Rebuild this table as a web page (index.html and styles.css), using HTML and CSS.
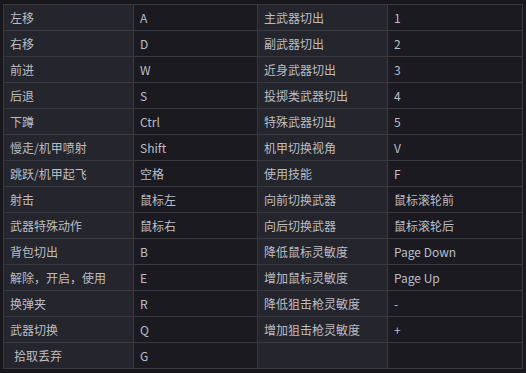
FILE: index.html
```html
<!DOCTYPE html>
<html lang="zh">
<head>
<meta charset="utf-8">
<link rel="stylesheet" href="styles.css">
</head>
<body>
<div class="keys">
  <div class="k">左移</div><div class="v">A</div><div class="k">主武器切出</div><div class="v">1</div>
  <div class="k">右移</div><div class="v">D</div><div class="k">副武器切出</div><div class="v">2</div>
  <div class="k">前进</div><div class="v">W</div><div class="k">近身武器切出</div><div class="v">3</div>
  <div class="k">后退</div><div class="v">S</div><div class="k">投掷类武器切出</div><div class="v">4</div>
  <div class="k">下蹲</div><div class="v">Ctrl</div><div class="k">特殊武器切出</div><div class="v">5</div>
  <div class="k">慢走/机甲喷射</div><div class="v">Shift</div><div class="k">机甲切换视角</div><div class="v">V</div>
  <div class="k">跳跃/机甲起飞</div><div class="v">空格</div><div class="k">使用技能</div><div class="v">F</div>
  <div class="k">射击</div><div class="v">鼠标左</div><div class="k">向前切换武器</div><div class="v">鼠标滚轮前</div>
  <div class="k">武器特殊动作</div><div class="v">鼠标右</div><div class="k">向后切换武器</div><div class="v">鼠标滚轮后</div>
  <div class="k">背包切出</div><div class="v">B</div><div class="k">降低鼠标灵敏度</div><div class="v">Page Down</div>
  <div class="k">解除，开启，使用</div><div class="v">E</div><div class="k">增加鼠标灵敏度</div><div class="v">Page Up</div>
  <div class="k">换弹夹</div><div class="v">R</div><div class="k">降低狙击枪灵敏度</div><div class="v">-</div>
  <div class="k">武器切换</div><div class="v">Q</div><div class="k">增加狙击枪灵敏度</div><div class="v">+</div>
  <div class="k indent">拾取丢弃</div><div class="v">G</div><div class="k"></div><div class="v"></div>
</div>
</body>
</html>
```
FILE: styles.css
```css
html, body {
  margin: 0;
  padding: 0;
  background: #18171c;
}
body {
  padding: 4px 0 0 3px;
  font-family: "Noto Sans CJK SC", "Noto Sans", sans-serif;
  font-size: 12px;
}
.keys {
  display: grid;
  grid-template-columns: 129px 123px 129px 134px;
  grid-auto-rows: 25px;
  gap: 1px;
  padding: 1px;
  width: max-content;
  background: #3a3941;
}
.k, .v {
  display: flex;
  align-items: center;
  padding-left: 6px;
  white-space: nowrap;
}
.k {
  background: #25252d;
  color: #bdbdc1;
}
.v {
  background: #1b1a20;
  color: #babec8;
}
.indent {
  padding-left: 10px;
}
```
